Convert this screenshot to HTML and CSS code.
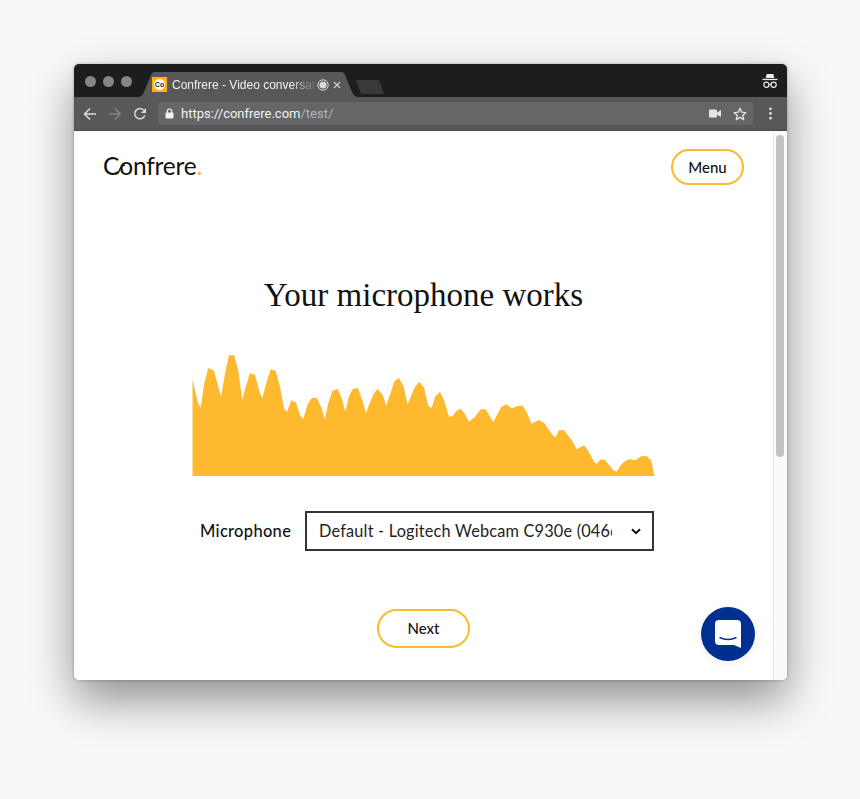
FILE: index.html
```html
<!DOCTYPE html>
<html lang="en">
<head>
<meta charset="utf-8">
<title>Confrere - Video conversation</title>
<link rel="stylesheet" href="styles.css">
</head>
<body>
<div class="window">
  <div class="titlebar">
    <div class="lights"><span class="light"></span><span class="light"></span><span class="light"></span></div>
    <div class="tab">
      <svg class="tab-shape" width="220" height="25" viewBox="0 0 220 25"><path d="M0 25 Q4 25 6 20 L13 3 Q14 0 17 0 H203 Q206 0 207 3 L214 20 Q216 25 220 25 Z" fill="#58585a"/></svg>
      <span class="favicon"><span class="favicon-in">Co</span></span>
      <span class="tab-title">Confrere - Video conversati</span>
      <svg class="rec" width="12" height="12" viewBox="0 0 12 12"><circle cx="6" cy="6" r="5.200" fill="none" stroke="#d8d8d8" stroke-width="1"/><circle cx="6" cy="6" r="3.600" fill="#d8d8d8"/></svg>
      <svg class="close" width="8" height="8" viewBox="0 0 8 8"><path d="M1 1l6 6M7 1L1 7" stroke="#d0d0d0" stroke-width="1.100"/></svg>
    </div>
    <svg class="newtab" width="30" height="14" viewBox="0 0 30 14"><path d="M1 0H22Q24 0 25 2L29 14H7Q6 14 5.500 12.500Z" fill="#38393b"/></svg>
    <svg class="incognito" width="16" height="16" viewBox="0 0 16 16"><path d="M4.700 1H11.300L12.300 5H3.700Z" fill="#ececec"/><rect x="0.500" y="5.800" width="15" height="1.300" fill="#ececec"/><circle cx="4.400" cy="11.800" r="2.600" fill="none" stroke="#ececec" stroke-width="1.200"/><circle cx="11.600" cy="11.800" r="2.600" fill="none" stroke="#ececec" stroke-width="1.200"/><path d="M7 11.300h2" stroke="#ececec" stroke-width="1"/></svg>
  </div>
  <div class="toolbar">
    <svg class="nav" width="14" height="14" viewBox="0 0 14 14"><path d="M13 7H2M7 1.500 1.500 7 7 12.500" fill="none" stroke="#dcdcdc" stroke-width="1.500"/></svg>
    <svg class="nav" width="14" height="14" viewBox="0 0 14 14"><path d="M1 7H12M7 1.500 12.500 7 7 12.500" fill="none" stroke="#858585" stroke-width="1.500"/></svg>
    <svg class="nav" width="14" height="14" viewBox="0 0 14 14"><path d="M11.800 8.500A5.200 5.200 0 1 1 10.700 3" fill="none" stroke="#dcdcdc" stroke-width="1.500"/><path d="M13 1v5H8Z" fill="#dcdcdc"/></svg>
    <div class="omnibox">
      <svg class="lock" width="9" height="11" viewBox="0 0 9 11"><path d="M2.300 5V3.200a2.200 2.200 0 0 1 4.400 0V5" fill="none" stroke="#f2f2f2" stroke-width="1.200"/><rect x="0.500" y="4.500" width="8" height="6" rx="1" fill="#f2f2f2"/></svg>
      <span class="url">https://confrere.com<span class="url-path">/test/</span></span>
      <svg class="cam" width="12" height="9" viewBox="0 0 12 9"><rect x="0" y="0.500" width="8" height="8" rx="1" fill="#e6e6e6"/><path d="M8 3.500 12 1V8L8 5.500Z" fill="#e6e6e6"/></svg>
      <svg class="star" width="14" height="14" viewBox="0 0 14 14"><path d="M7 1.300 8.700 5.200 12.900 5.600 9.700 8.400 10.700 12.600 7 10.400 3.300 12.600 4.300 8.400 1.100 5.600 5.300 5.200Z" fill="none" stroke="#e6e6e6" stroke-width="1.300" stroke-linejoin="round"/></svg>
    </div>
    <svg class="dots" width="3" height="13" viewBox="0 0 3 13"><circle cx="1.500" cy="1.800" r="1.400" fill="#dcdcdc"/><circle cx="1.500" cy="6.500" r="1.400" fill="#dcdcdc"/><circle cx="1.500" cy="11.200" r="1.400" fill="#dcdcdc"/></svg>
  </div>
  <div class="viewport">
    <main class="page">
      <header class="page-head">
        <div class="logo">
          <span class="logo-c">C</span><span class="logo-o">o</span><span>nfrere</span><span class="logo-dot">.</span>
          <svg class="logo-link" width="10" height="11" viewBox="0 0 10 11"><path d="M0 9.500C3 11 4 7.500 5 5C6 3 7.500 1 10 1" fill="none" stroke="#111" stroke-width="1.400"/></svg>
        </div>
        <button class="pill pill-menu" type="button">Menu</button>
      </header>
      <h1 class="heading">Your microphone works</h1>
      <svg class="wave" width="463" height="122" viewBox="192 355 463 122">
        <path fill="#ffb92f" d="M192.500 476 V379.300 L197.700 402 L200.700 408 L204.300 383 L208.300 368 L214 370.700 L221 397 L225.300 371.700 L229 355.300 L234.300 355.300 L238.300 371 L242.300 400 L245.700 386.700 L250 373.300 L255 375 L260 393.300 L262.300 398.300 L266.700 381.700 L270.700 369.300 L275.700 371 L280 386.700 L284 408.300 L287 411.700 L291.300 400.300 L296 402.700 L300.300 415.700 L303.300 419 L307.700 404.300 L311.700 398 L316.700 397.700 L321.700 408.300 L324.700 419 L328.300 403.300 L332.300 391 L337.700 388.700 L341.700 398.300 L345.300 411.700 L348.700 396.700 L352.700 389 L358 388 L362.300 400 L366 413 L373.300 394.300 L377.700 389 L382.700 395 L386.300 405.700 L394.300 381.700 L398.700 377.700 L403.300 385.700 L407.700 404.300 L415 386.700 L419.300 381.700 L424 387.300 L428.300 405.700 L431.700 408.300 L435 396.700 L440 391.700 L444.300 401 L449 416.700 L452.300 416.300 L456.700 410.700 L460.700 408.700 L465 414.300 L469 421.700 L475 416.700 L480.700 409.300 L485.700 409.300 L493.300 422.300 L501 407.300 L506 404.300 L511.700 408.300 L518.300 406 L522.700 405.700 L527.300 413.300 L531.300 423.700 L539 420 L544 422.700 L553.300 436 L555.700 437 L559 430.300 L564 430 L572.300 441 L576.700 449.300 L584 445.300 L588.300 451 L594 461.700 L596.700 463.700 L600.700 459.300 L605 460 L613.300 470.300 L616.700 471.700 L621.700 464 L626.700 460 L630.700 459.300 L635 460.300 L641.700 456 L646.700 456.300 L651 460 L654.500 476 Z"/>
      </svg>
      <div class="mic-row">
        <label class="mic-label" for="mic">Microphone</label>
        <div class="select-wrap">
          <select class="mic-select" id="mic">
            <option>Default - Logitech Webcam C930e (046d:0843)</option>
          </select>
          <svg class="chevron" width="10" height="7" viewBox="0 0 10 7"><path d="M1 1.200 5 5.200 9 1.200" fill="none" stroke="#111" stroke-width="2"/></svg>
        </div>
      </div>
      <button class="pill pill-next" type="button">Next</button>
      <div class="chat">
        <svg width="26" height="28" viewBox="0 0 26 28"><path d="M4 0H22Q26 0 26 4V28L19 25H4Q0 25 0 21V4Q0 0 4 0Z" fill="#fff"/><path d="M4.500 17.500Q13 21.500 21.500 17.500" fill="none" stroke="#00308f" stroke-width="1.600"/></svg>
      </div>
    </main>
    <div class="scrolltrack"><div class="scrollthumb"></div></div>
  </div>
</div>
</body>
</html>
```

FILE: styles.css
```css
* { box-sizing: border-box; }
html, body { margin: 0; height: 100%; }
body {
  background: #f8f8f8;
  overflow: hidden;
  padding: 64px 0 0 74px;
  font-family: "Lato", "Liberation Sans", sans-serif;
}
.window {
  width: 713px;
  height: 616px;
  border-radius: 5px;
  overflow: visible;
  display: flex;
  flex-direction: column;
  box-shadow: 0 20px 45px rgba(0,0,0,.42), 0 0 3px rgba(0,0,0,.3);
}
.titlebar {
  height: 33px;
  flex: none;
  background: #1c1d1f;
  border-radius: 5px 5px 0 0;
  display: flex;
  align-items: flex-end;
  padding-left: 11px;
}
.lights { display: flex; gap: 7px; align-self: flex-start; margin-top: 12px; }
.light { width: 11px; height: 11px; border-radius: 50%; background: #86868a; }
.tab {
  position: relative;
  width: 220px;
  height: 25px;
  margin-left: 6px;
  display: flex;
  align-items: center;
  padding: 0 0 0 14px;
  flex: none;
}
.tab-shape { position: absolute; left: 0; top: 0; }
.favicon {
  position: relative;
  width: 15px;
  height: 15px;
  background: #ffb400;
  display: flex;
  align-items: center;
  justify-content: center;
  flex: none;
}
.favicon-in {
  width: 11px;
  height: 11px;
  border-radius: 50%;
  background: #fff;
  color: #222;
  font: 700 7px/11px "Liberation Sans", sans-serif;
  text-align: center;
}
.tab-title {
  position: relative;
  margin-left: 5px;
  width: 145px;
  flex: none;
  overflow: hidden;
  white-space: nowrap;
  font: 12px/16px "Liberation Sans", sans-serif;
  color: #f0f0f0;
  -webkit-mask-image: linear-gradient(90deg, #000 82%, transparent 100%);
  mask-image: linear-gradient(90deg, #000 82%, transparent 100%);
}
.rec { position: relative; flex: none; }
.close { position: relative; margin-left: 4px; flex: none; }
.newtab { margin-left: -3px; margin-bottom: 3px; flex: none; }
.incognito { margin-left: auto; margin-right: 9px; align-self: center; flex: none; }
.toolbar {
  height: 34px;
  flex: none;
  background: #58585a;
  border-bottom: 1px solid #4a4a4c;
  display: flex;
  align-items: center;
  padding: 0 15px 0 9px;
  gap: 11px;
}
.nav { flex: none; }
.omnibox {
  flex: 1;
  height: 23px;
  background: #666668;
  border-radius: 2px;
  display: flex;
  align-items: center;
  padding: 0 6px 0 7px;
  margin-right: 5px;
}
.lock { flex: none; }
.url { margin-left: 7px; font: 13px/16px "Roboto", "Liberation Sans", sans-serif; color: #f2f2f2; }
.url-path { color: #b4b4b4; }
.cam { margin-left: auto; flex: none; }
.star { margin-left: 12px; flex: none; }
.dots { flex: none; }
.viewport { flex: 1; display: flex; min-height: 0; background: #fff; border-radius: 0 0 5px 5px; }
.page {
  position: relative;
  flex: 1;
  display: flex;
  flex-direction: column;
  align-items: center;
}
.page-head {
  align-self: stretch;
  display: flex;
  justify-content: space-between;
  align-items: center;
  padding: 18px 29px 0;
}
.logo {
  position: relative;
  font: 400 24.500px/34px "Lato", sans-serif;
  color: #111;
  letter-spacing: -.2px;
  display: flex;
  width: 100px;
  padding-bottom: 2px;
}
.logo-link { position: absolute; left: 12px; top: 15px; }
.logo-dot { color: #ffb92f; }
.pill {
  background: #fff;
  border: 2px solid #ffb92f;
  font: 500 15px/20px "Lato", sans-serif;
  color: #111;
  padding: 0 0 1px;
}
.pill-menu { width: 73px; height: 36px; border-radius: 18px; }
.heading {
  margin: 90px 0 0;
  font: 400 33px/40px "Liberation Serif", serif;
  color: #111;
  text-align: center;
}
.wave { display: block; margin-top: 40px; margin-left: -1px; }
.mic-row {
  display: flex;
  align-items: center;
  justify-content: space-between;
  margin-top: 34px;
  width: 454px;
  margin-left: 7px;
}
.mic-label { font: 500 16.500px/20px "Lato", sans-serif; color: #111; letter-spacing: .3px; }
.select-wrap { position: relative; width: 349px; height: 40px; flex: none; }
.mic-select {
  appearance: none;
  -webkit-appearance: none;
  width: 100%;
  height: 100%;
  border: 2px solid #333;
  border-radius: 0;
  background: #fff;
  color: #222;
  font: 400 16.300px/20px "Lato", sans-serif;
  padding: 0 40px 0 12px;
  letter-spacing: .2px;
}
.chevron { position: absolute; right: 13px; top: 17px; }
.pill-next { width: 93px; height: 39px; border-radius: 20px; margin-top: 58px; }
.chat {
  position: absolute;
  left: 627px;
  top: 476px;
  width: 54px;
  height: 54px;
  border-radius: 50%;
  background: #00308f;
  display: flex;
  align-items: center;
  justify-content: center;
  box-shadow: 0 2px 10px rgba(0,0,0,.08);
}
.scrolltrack {
  width: 14px;
  flex: none;
  background: #fafafa;
  border-left: 1px solid #e8e8e8;
  border-radius: 0 0 5px 0;
  padding: 4px 3px 0 2px;
}
.scrollthumb { height: 322px; background: #c1c1c1; border-radius: 4px; }
```
